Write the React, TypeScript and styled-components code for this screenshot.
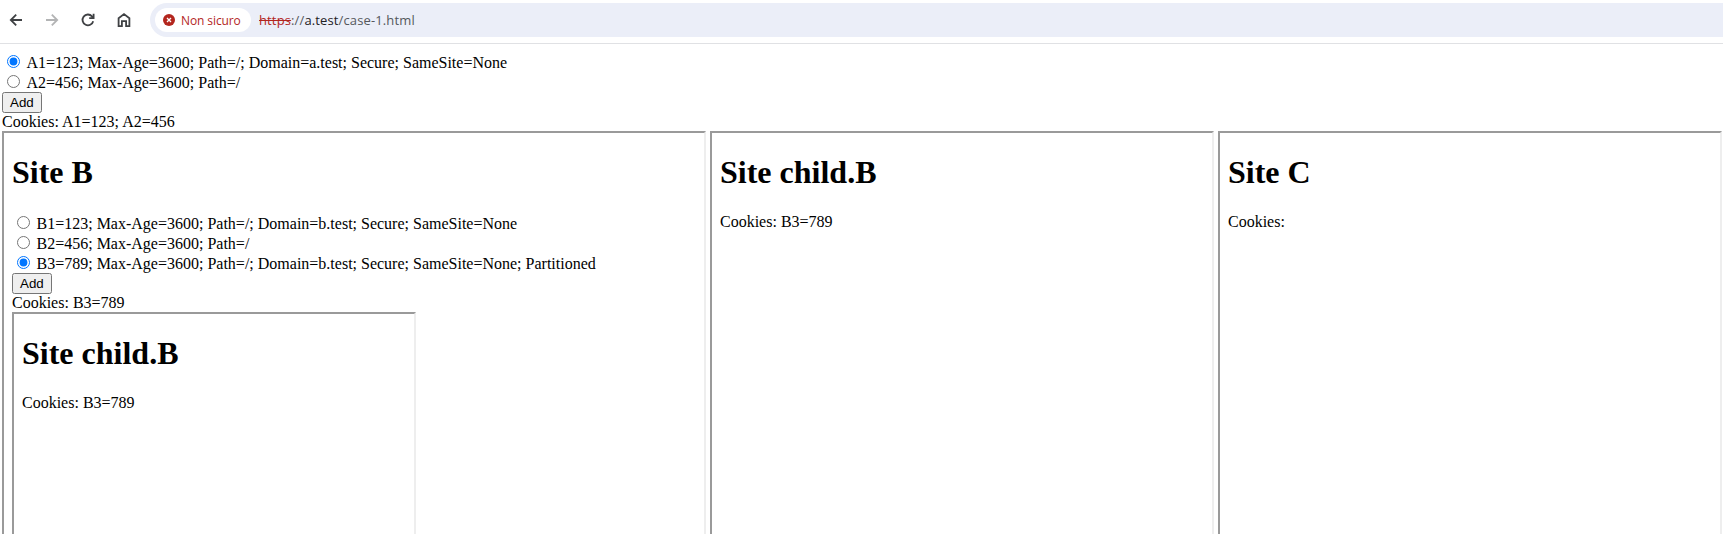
import React from "react";
import styled, { createGlobalStyle } from "styled-components";

const GlobalStyle = createGlobalStyle`
  *, *::before, *::after { box-sizing: border-box; }
  body {
    margin: 0;
    background: #fff;
    color: #000;
    font-family: "Liberation Serif", "Times New Roman", serif;
    font-size: 16px;
  }
`;

const Window = styled.div`
  display: flex;
  flex-direction: column;
  height: 534px;
  overflow: hidden;
`;

const Toolbar = styled.header`
  display: flex;
  flex: none;
  height: 44px;
  padding-top: 3px;
  border-bottom: 1px solid #e0e1e4;
  font-family: "Open Sans", "Noto Sans", sans-serif;
`;

const NavButtons = styled.nav`
  display: flex;
  align-items: center;
  gap: 16px;
  width: 150px;
  height: 34px;
  padding-left: 6px;
`;

const NavIcon = styled.svg<{ $muted?: boolean }>`
  flex: none;
  width: 20px;
  height: 20px;
  fill: none;
  stroke: ${({ $muted }) => ($muted ? "#b3b4b5" : "#3f4144")};
  stroke-width: 1.8;
`;

const AddressBar = styled.div`
  display: flex;
  align-items: center;
  flex: 1;
  height: 34px;
  padding-left: 5px;
  border-radius: 17px 0 0 17px;
  background: #ebeef8;
`;

const SecurityChip = styled.div`
  display: flex;
  align-items: center;
  gap: 6px;
  width: 96px;
  height: 24px;
  padding-left: 8px;
  border-radius: 12px;
  background: #fff;
  color: #b3261e;
  font-size: 12px;
  font-weight: 500;
  letter-spacing: -0.1px;
  white-space: nowrap;
`;

const Url = styled.div`
  margin-left: 8px;
  color: #55585c;
  font-size: 13px;
  letter-spacing: 0.13px;
  white-space: nowrap;
`;

const Scheme = styled.span`
  color: #b3261e;
  text-decoration: line-through;
`;

const Host = styled.span`
  color: #1f2023;
`;

const Page = styled.main`
  flex: 1;
  min-height: 0;
  padding: 8px 0 0 2px;
`;

const Option = styled.label`
  display: flex;
  height: 20px;
  line-height: 18px;
  padding-top: 2px;
  white-space: pre;
`;

const Radio = styled.input`
  flex: none;
  width: 13px;
  height: 13px;
  margin: 1px 6.5px 0 5px;
`;

const AddButton = styled.button`
  display: block;
  height: 21px;
  padding: 1px 6px;
  font-family: "Liberation Sans", Arial, sans-serif;
  font-size: 13.333px;
`;

const Cookies = styled.div`
  height: 18px;
  line-height: 18px;
`;

const Frames = styled.div`
  display: flex;
  gap: 4px;
`;

const Frame = styled.section<{ $width: number }>`
  flex: none;
  width: ${({ $width }) => $width}px;
  height: 504px;
  padding: 21px 8px 0;
  border: 2px solid;
  border-color: #9a9a9a #eee #eee #9a9a9a;
  overflow: hidden;
`;

const Title = styled.h1`
  height: 37px;
  margin: 0 0 22px;
  font-size: 32px;
  line-height: 37px;
`;

interface CookieFormProps {
  name: string;
  options: string[];
  selected: number;
  cookies: string;
}

function CookieForm({ name, options, selected, cookies }: CookieFormProps) {
  return (
    <>
      {options.map((option, index) => (
        <Option key={option}>
          <Radio type="radio" name={name} defaultChecked={index === selected} />
          {option}
        </Option>
      ))}
      <AddButton>Add</AddButton>
      <Cookies>Cookies: {cookies}</Cookies>
    </>
  );
}

export default function App() {
  return (
    <Window>
      <GlobalStyle />
      <Toolbar>
        <NavButtons>
          <NavIcon viewBox="0 0 20 20">
            <path d="M16 10H5M10.2 4.6L4.8 10l5.4 5.4" />
          </NavIcon>
          <NavIcon viewBox="0 0 20 20" $muted>
            <path d="M4 10h11M9.8 4.6l5.4 5.4-5.4 5.4" />
          </NavIcon>
          <NavIcon viewBox="0 0 20 20">
            <path d="M15.2 11.2A5.4 5.4 0 1 1 14 6.3l1.4 1.5M15.6 3.8v4.4h-4.4" />
          </NavIcon>
          <NavIcon viewBox="0 0 20 20">
            <path d="M4.6 8.2L10 4.1l5.4 4.1v8h-3.3v-5H7.9v5H4.6z" />
          </NavIcon>
        </NavButtons>
        <AddressBar>
          <SecurityChip>
            <svg width="12" height="12" viewBox="0 0 12 12">
              <circle cx="6" cy="6" r="6" fill="#b3261e" />
              <path d="M4 4l4 4M8 4l-4 4" stroke="#fff" strokeWidth="1.3" />
            </svg>
            Non sicuro
          </SecurityChip>
          <Url>
            <Scheme>https</Scheme>://<Host>a.test</Host>/case-1.html
          </Url>
        </AddressBar>
      </Toolbar>
      <Page>
        <CookieForm
          name="site-a"
          selected={0}
          options={[
            "A1=123; Max-Age=3600; Path=/; Domain=a.test; Secure; SameSite=None",
            "A2=456; Max-Age=3600; Path=/",
          ]}
          cookies="A1=123; A2=456"
        />
        <Frames>
          <Frame $width={704}>
            <Title>Site B</Title>
            <CookieForm
              name="site-b"
              selected={2}
              options={[
                "B1=123; Max-Age=3600; Path=/; Domain=b.test; Secure; SameSite=None",
                "B2=456; Max-Age=3600; Path=/",
                "B3=789; Max-Age=3600; Path=/; Domain=b.test; Secure; SameSite=None; Partitioned",
              ]}
              cookies="B3=789"
            />
            <Frame $width={404}>
              <Title>Site child.B</Title>
              <Cookies>Cookies: B3=789</Cookies>
            </Frame>
          </Frame>
          <Frame $width={504}>
            <Title>Site child.B</Title>
            <Cookies>Cookies: B3=789</Cookies>
          </Frame>
          <Frame $width={504}>
            <Title>Site C</Title>
            <Cookies>Cookies:</Cookies>
          </Frame>
        </Frames>
      </Page>
    </Window>
  );
}
